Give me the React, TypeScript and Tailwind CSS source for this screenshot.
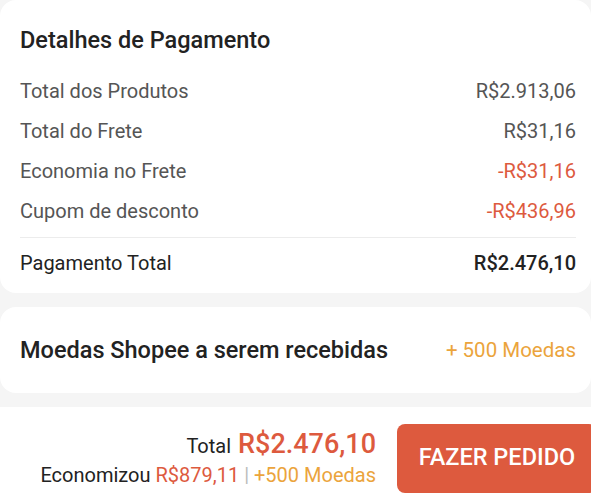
import React from "react";

type Row = {
  label: string;
  value: string;
  highlight?: boolean;
};

const rows: Row[] = [
  { label: "Total dos Produtos", value: "R$2.913,06" },
  { label: "Total do Frete", value: "R$31,16" },
  { label: "Economia no Frete", value: "-R$31,16", highlight: true },
  { label: "Cupom de desconto", value: "-R$436,96", highlight: true },
];

const App = () => {
  return (
    <div
      className="flex h-[500px] w-[591px] flex-col overflow-hidden bg-[#f5f5f5]"
      style={{ fontFamily: "Roboto, 'Noto Sans', sans-serif" }}
    >
      <div className="rounded-[16px] bg-white pb-[5px] pl-5 pr-[15px] pt-[26px]">
        <h2 className="text-[23.5px] font-medium leading-[28px] text-[#222]">
          Detalhes de Pagamento
        </h2>
        <div className="mt-[17px] flex flex-col">
          {rows.map((row) => (
            <div
              key={row.label}
              className="flex h-[40px] items-center justify-between text-[20px]"
            >
              <span className="text-[#555]">{row.label}</span>
              <span className={row.highlight ? "text-[#dd5a3e]" : "text-[#555]"}>
                {row.value}
              </span>
            </div>
          ))}
        </div>
        <div className="mt-[6px] border-t border-[#ececec]" />
        <div className="flex h-[50px] items-center justify-between text-[20px] text-[#222]">
          <span>Pagamento Total</span>
          <span className="font-medium">R$2.476,10</span>
        </div>
      </div>

      <div className="mt-[14px] flex h-[86px] items-center justify-between rounded-[16px] bg-white pl-5 pr-[15px]">
        <span className="text-[23.5px] font-medium leading-[30px] text-[#222]">
          Moedas Shopee a serem recebidas
        </span>
        <span className="text-[20.5px] text-[#eba43c]">+ 500 Moedas</span>
      </div>

      <div className="mt-[14px] flex flex-1 items-center justify-end gap-[21px] bg-white pl-5 pt-[9px]">
        <div className="flex flex-col items-end">
          <div className="flex items-baseline gap-[7px]">
            <span className="text-[20px] text-[#222]">Total</span>
            <span className="text-[27px] font-medium leading-[34px] text-[#dd5a3e]">
              R$2.476,10
            </span>
          </div>
          <div className="text-[20px] leading-[28px] text-[#222]">
            Economizou <span className="text-[#dd5a3e]">R$879,11</span>{" "}
            <span className="text-[#bbb]">|</span>{" "}
            <span className="text-[#eba43c]">+500 Moedas</span>
          </div>
        </div>
        <button className="-mr-[6px] flex h-[69px] w-[200px] items-center justify-center rounded-[8px] bg-[#dd5a3e] text-[23.5px] font-medium text-white">
          FAZER PEDIDO
        </button>
      </div>
    </div>
  );
};

export default App;
